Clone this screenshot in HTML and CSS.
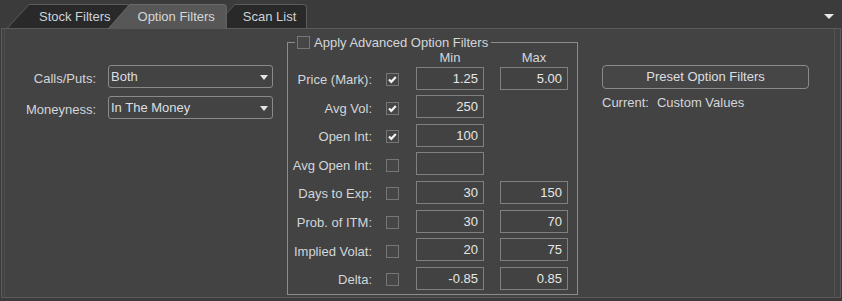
FILE: index.html
```html
<!DOCTYPE html>
<html lang="en">
<head>
    <meta charset="UTF-8">
    <title>Option Filters</title>
    <link rel="stylesheet" href="styles.css">
</head>
<body>

<div class="tabbar">
    <div class="tab tab-stock"><div class="tab-in">Stock Filters</div></div>
    <div class="tab tab-active"><div class="tab-in">Option Filters</div></div>
    <div class="tab tab-scan"><div class="tab-in">Scan List</div></div>
    <span class="tab-menu"></span>
</div>

<div class="panel">
    <div class="panel-body">

        <div class="basic">
            <div class="field">
                <label>Calls/Puts:</label>
                <div class="combo"><span>Both</span><i class="combo-arrow"></i></div>
            </div>
            <div class="field">
                <label>Moneyness:</label>
                <div class="combo"><span>In The Money</span><i class="combo-arrow"></i></div>
            </div>
        </div>

        <fieldset class="advanced">
            <legend><span class="cb"></span>Apply Advanced Option Filters</legend>
            <div class="adv-grid">
                <span></span><span></span>
                <span class="col-head">Min</span>
                <span class="col-head">Max</span>

                <span class="row-label">Price (Mark):</span>
                <span class="cb checked"><svg viewBox="0 0 11 11"><polyline points="2,5.5 4.3,7.8 8.8,3"/></svg></span>
                <span class="num">1.25</span>
                <span class="num">5.00</span>

                <span class="row-label">Avg Vol:</span>
                <span class="cb checked"><svg viewBox="0 0 11 11"><polyline points="2,5.5 4.3,7.8 8.8,3"/></svg></span>
                <span class="num">250</span>
                <span></span>

                <span class="row-label">Open Int:</span>
                <span class="cb checked"><svg viewBox="0 0 11 11"><polyline points="2,5.5 4.3,7.8 8.8,3"/></svg></span>
                <span class="num">100</span>
                <span></span>

                <span class="row-label">Avg Open Int:</span>
                <span class="cb"></span>
                <span class="num"></span>
                <span></span>

                <span class="row-label">Days to Exp:</span>
                <span class="cb"></span>
                <span class="num">30</span>
                <span class="num">150</span>

                <span class="row-label">Prob. of ITM:</span>
                <span class="cb"></span>
                <span class="num">30</span>
                <span class="num">70</span>

                <span class="row-label">Implied Volat:</span>
                <span class="cb"></span>
                <span class="num">20</span>
                <span class="num">75</span>

                <span class="row-label">Delta:</span>
                <span class="cb"></span>
                <span class="num">-0.85</span>
                <span class="num">0.85</span>
            </div>
        </fieldset>

        <div class="presets">
            <button class="preset-btn">Preset Option Filters</button>
            <div class="current"><span class="current-label">Current:</span>Custom Values</div>
        </div>

    </div>
</div>

</body>
</html>
```

FILE: styles.css
```css
body {
    margin: 0;
    width: 842px;
    height: 301px;
    overflow: hidden;
    background-color: #3b3b3b;
    font-family: "Liberation Sans", Arial, sans-serif;
    font-size: 13px;
    color: #d3d6da;
}

/* tab strip */
.tabbar {
    display: flex;
    align-items: flex-end;
    height: 28px;
    padding-left: 7px;
    position: relative;
    z-index: 1;
}
.tab {
    height: 24px;
    padding: 1px 1px 0;
    box-sizing: border-box;
    background-color: #5c5c5c;
    border-top-right-radius: 4px;
    clip-path: polygon(0 100%, 22px 0, 100% 0, 100% 100%);
}
.tab-in {
    height: 100%;
    box-sizing: border-box;
    display: flex;
    align-items: center;
    padding: 0 10px 1px 29px;
    background-color: #292929;
    border-top-right-radius: 3px;
    clip-path: polygon(0 100%, 21px 0, 100% 0, 100% 100%);
    color: #cdd3da;
    white-space: nowrap;
}
.tab-stock .tab-in {
    padding-left: 31px;
    padding-right: 18px;
}
.tab-active {
    height: 25px;
    margin-bottom: -1px;
    margin-left: -22px;
    position: relative;
    z-index: 2;
    background-color: #6b6b6b;
}
.tab-active .tab-in {
    background-color: #575757;
    padding-right: 11px;
    padding-bottom: 2px;
    color: #d6d8da;
}
.tab-scan {
    margin-left: -14px;
}
.tab-menu {
    align-self: flex-start;
    width: 0;
    height: 0;
    margin: 14px 8px 0 auto;
    border-left: 5px solid transparent;
    border-right: 5px solid transparent;
    border-top: 5px solid #e8e8e8;
}

/* main panel */
.panel {
    height: 270px;
    margin: 0 1px;
    box-sizing: border-box;
    border: 1px solid #5a5a5a;
    background-color: #434343;
}
.panel-body {
    display: flex;
    align-items: flex-start;
    height: 100%;
    margin: 0 5px 0 2px;
    border-left: 1px solid #4c4c4c;
    border-right: 1px solid #525252;
}

/* calls / puts, moneyness */
.basic {
    margin-top: 36px;
    display: flex;
    flex-direction: column;
    gap: 8px;
}
.field {
    display: flex;
    align-items: center;
}
.field label {
    width: 91px;
    margin-right: 12px;
    padding-top: 3px;
    text-align: right;
}
.combo {
    width: 165px;
    height: 23px;
    box-sizing: border-box;
    display: flex;
    align-items: center;
    justify-content: space-between;
    padding: 0 4px 1px 2px;
    border: 1px solid #8a8a8a;
    border-radius: 3px;
    color: #dcdfe2;
}
.combo-arrow {
    width: 0;
    height: 0;
    margin-top: 3px;
    border-left: 4.5px solid transparent;
    border-right: 4.5px solid transparent;
    border-top: 5px solid #e4e4e4;
}

/* advanced group */
.advanced {
    width: 291px;
    box-sizing: border-box;
    min-width: 0;
    margin: 7px 0 0 14px;
    padding: 0 9px 4px 0;
    border: 1px solid #8c8c8c;
}
.advanced legend {
    display: flex;
    align-items: center;
    gap: 4px;
    height: 13px;
    line-height: 13px;
    margin-left: 7px;
    padding: 0 3px 0 2px;
}
.adv-grid {
    display: grid;
    grid-template-columns: 98px 30px 84px 68px;
    grid-template-rows: 12px repeat(8, 23px);
    row-gap: 5.6px;
}
.col-head {
    width: 68px;
    align-self: end;
    margin-bottom: -3px;
    line-height: 12px;
    text-align: center;
}
.row-label {
    align-self: center;
    padding: 3px 14px 0 0;
    text-align: right;
    white-space: nowrap;
}
.cb {
    width: 13px;
    height: 13px;
    box-sizing: border-box;
    border: 1px solid #767676;
    background-color: #464646;
    align-self: center;
    margin-top: 3px;
}
.advanced legend .cb {
    margin-top: 0;
}
.cb svg {
    display: block;
    width: 11px;
    height: 11px;
}
.cb polyline {
    fill: none;
    stroke: #f2f2f2;
    stroke-width: 2.2;
}
.num {
    width: 68px;
    height: 23px;
    box-sizing: border-box;
    padding-right: 5px;
    border: 1px solid #808080;
    background-color: #424242;
    line-height: 21px;
    text-align: right;
    color: #e6e6e6;
}

/* presets */
.presets {
    margin: 36px 0 0 24px;
}
.preset-btn {
    display: block;
    width: 207px;
    height: 24px;
    padding: 0 0 1px;
    border: 1px solid #8a8a8a;
    border-radius: 4px;
    background-color: #464646;
    font-family: inherit;
    font-size: 13px;
    color: #dcdfe2;
}
.current {
    margin-top: 7px;
    line-height: 14px;
}
.current-label {
    margin-right: 8px;
}
```
